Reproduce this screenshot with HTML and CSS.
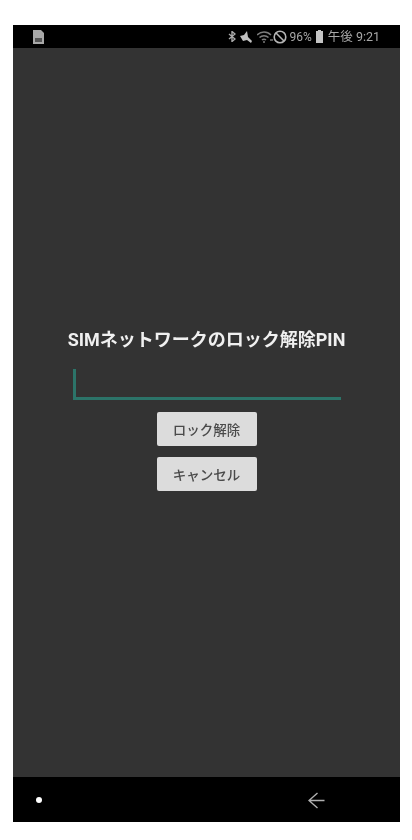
FILE: index.html
```html
<!DOCTYPE html>
<html lang="ja">

<head>
  <meta charset="UTF-8">
  <meta name="viewport" content="width=device-width, initial-scale=1.0">
  <title>SIM</title>
  <link rel="stylesheet" href="styles.css">
</head>

<body>
  <div class="phone">
    <div class="status-bar">
      <svg class="sim-icon" width="13" height="14" viewBox="0 0 13 14">
        <path d="M1 0h8l3 3v11H1z" fill="#a8a8a8" />
        <rect x="3" y="8" width="7" height="4" fill="#555" />
      </svg>
      <div class="status-right">
        <svg class="bt-icon" width="8" height="11" viewBox="0 0 8 11" fill="none" stroke="#aaa" stroke-width="1.4">
          <path d="M1 3l6 5-3 2.500v-10L7 3 1 8" />
        </svg>
        <svg class="mute-icon" width="14" height="12" viewBox="0 0 14 12">
          <path d="M1 5l4-1 3-4 1 6 4 4-1 2-4-3-4 1z" fill="#c0c0c0" />
        </svg>
        <svg class="wifi-icon" width="16" height="12" viewBox="0 0 16 12" fill="none" stroke="#7c7c7c" stroke-width="1.500">
          <path d="M0 4c4-4 10-4 14 0M2.500 6.500c2.500-2.500 6.500-2.500 9 0M5 9c1-1 3-1 4 0" />
          <circle cx="7" cy="11" r="1" fill="#7c7c7c" stroke="none" />
          <path d="M13 9h3" />
        </svg>
        <svg class="block-icon" width="14" height="14" viewBox="0 0 14 14" fill="none" stroke="#b5b5b5" stroke-width="1.600">
          <circle cx="7" cy="7" r="5.800" />
          <path d="M3 3l8 8" />
        </svg>
        <span class="status-text battery-text">96%</span>
        <svg class="battery-icon" width="7" height="13" viewBox="0 0 7 13">
          <path d="M2 0h3v1h2v12H0V1h2z" fill="#c4c4c4" />
        </svg>
        <span class="status-text time-text">午後 9:21</span>
      </div>
    </div>

    <div class="content">
      <h1 class="title">SIMネットワークのロック解除PIN</h1>
      <div class="pin-input"></div>
      <button class="action-btn btn-unlock">ロック解除</button>
      <button class="action-btn">キャンセル</button>
    </div>

    <div class="nav-bar">
      <span class="nav-dot"></span>
      <svg class="nav-back" width="17" height="17" viewBox="0 0 17 17" fill="none" stroke="#b0b0b0" stroke-width="1.400">
        <path d="M16.500 8.500H1M9.500 1L1 8.500 9.500 16" />
      </svg>
    </div>
  </div>
</body>

</html>
```

FILE: styles.css
```css
/* 全体 */
body {
  margin: 0;
  background-color: #fff;
  font-family: Roboto, "Noto Sans CJK JP", sans-serif;
}

.phone {
  width: 387px;
  height: 797px;
  margin: 25px 0 0 13px;
  display: flex;
  flex-direction: column;
  background-color: #333;
  filter: blur(0.5px);
}

/* ステータスバー */
.status-bar {
  height: 23px;
  flex-shrink: 0;
  display: flex;
  align-items: center;
  justify-content: space-between;
  padding: 0 20px 0 19px;
  background-color: #000;
}

.status-right {
  display: flex;
  align-items: center;
}

.mute-icon {
  margin-left: 3px;
}

.wifi-icon {
  margin-left: 4px;
}

.status-text {
  color: #a8a8a8;
  font-size: 12.500px;
  line-height: 14px;
  white-space: nowrap;
}

.battery-text {
  margin-left: 3px;
  font-size: 12px;
}

.battery-icon {
  margin-left: 4px;
}

.time-text {
  margin-left: 5px;
}

/* 本体 */
.content {
  flex: 1;
  display: flex;
  flex-direction: column;
  align-items: center;
  padding-top: 280px;
  box-sizing: border-box;
}

.title {
  margin: 0;
  color: #f0f0f0;
  font-size: 18px;
  font-weight: 700;
  line-height: 24px;
  white-space: nowrap;
}

.pin-input {
  width: 268px;
  height: 31px;
  margin-top: 17px;
  box-sizing: border-box;
  border-left: 3px solid #2c7469;
  border-bottom: 3px solid #2c7469;
}

.action-btn {
  width: 100px;
  height: 34px;
  margin-top: 11px;
  padding: 0;
  border: none;
  border-radius: 2px;
  background-color: #dcdcdc;
  color: #4a4a4a;
  font-family: inherit;
  font-size: 13.500px;
  font-weight: 500;
}

.btn-unlock {
  margin-top: 12px;
}

/* ナビゲーションバー */
.nav-bar {
  height: 45px;
  flex-shrink: 0;
  position: relative;
  background-color: #000;
}

.nav-dot {
  position: absolute;
  left: 23px;
  top: 20px;
  width: 6px;
  height: 6px;
  border-radius: 50%;
  background-color: #fff;
}

.nav-back {
  position: absolute;
  left: 295px;
  top: 15px;
}
```
